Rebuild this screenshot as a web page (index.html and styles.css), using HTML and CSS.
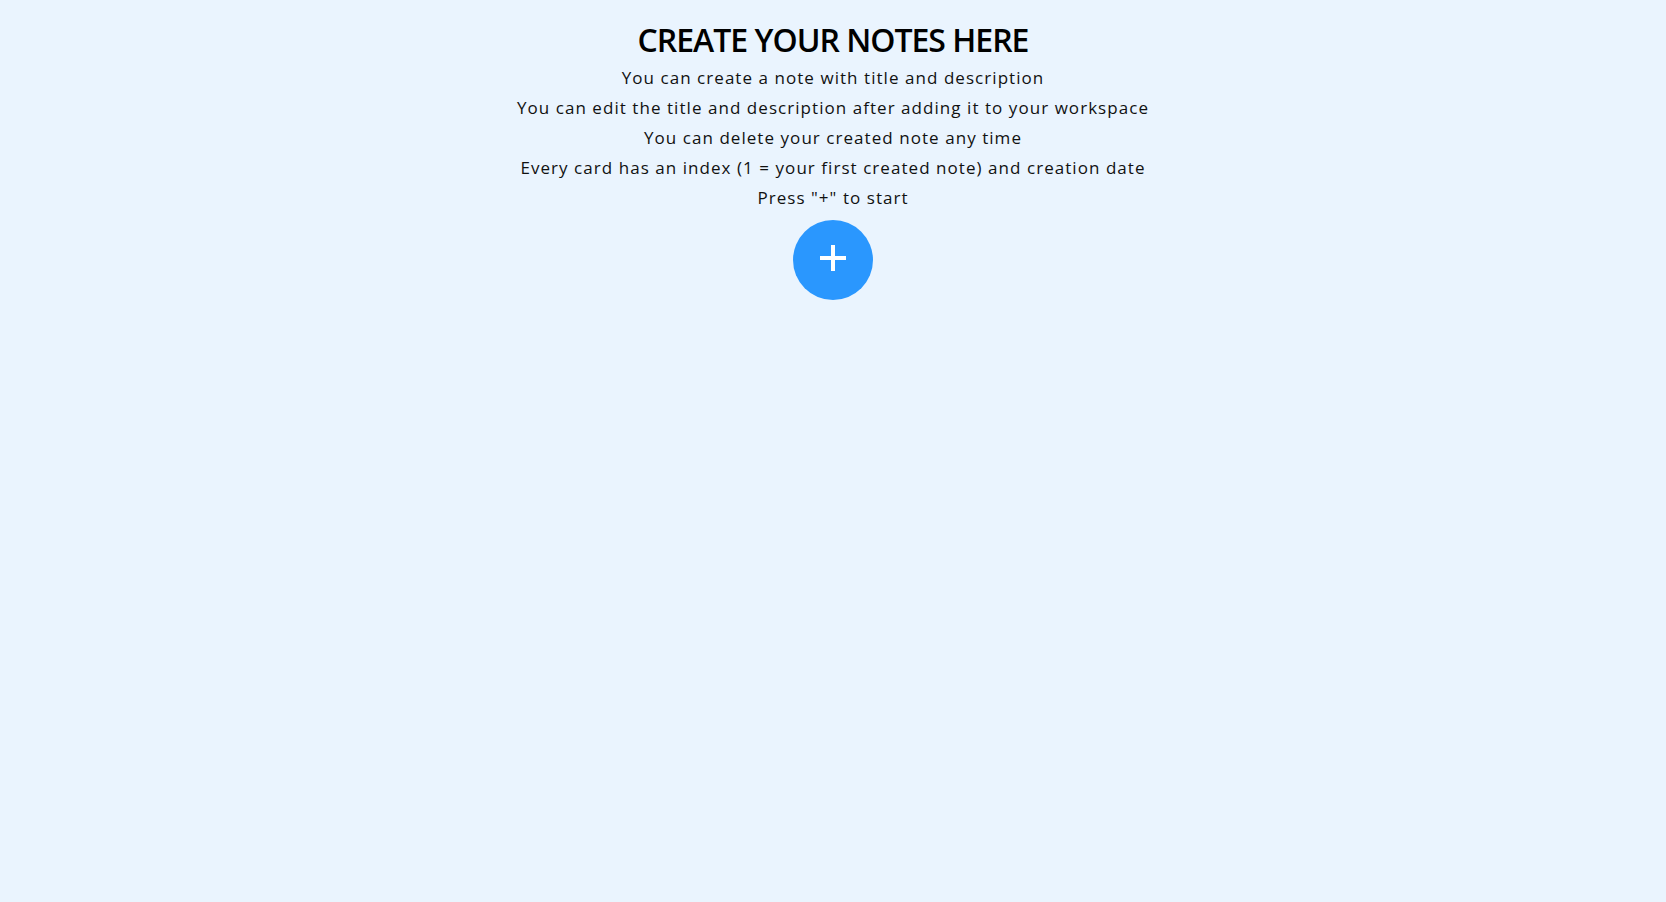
FILE: index.html
```html
<!DOCTYPE html>
<html lang="en">
<head>
<meta charset="utf-8">
<title>Notes</title>
<link rel="stylesheet" href="styles.css">
</head>
<body>
<main class="intro">
  <h1 class="intro-title">CREATE YOUR NOTES HERE</h1>
  <p class="intro-line">You can create a note with title and description</p>
  <p class="intro-line">You can edit the title and description after adding it to your workspace</p>
  <p class="intro-line">You can delete your created note any time</p>
  <p class="intro-line">Every card has an index (1 = your first created note) and creation date</p>
  <p class="intro-line">Press "+" to start</p>
  <button class="add-btn" type="button" aria-label="Add note">
    <svg class="add-icon" width="26" height="26" viewBox="0 0 26 26"><path d="M13 0v26M0 13h26" stroke="#fff" stroke-width="4"/></svg>
  </button>
</main>
</body>
</html>
```
FILE: styles.css
```css
html, body {
  margin: 0;
  padding: 0;
  background: #eaf4fe;
  min-height: 100%;
}
body {
  font-family: "Open Sans", "Liberation Sans", sans-serif;
  color: #111;
}
.intro {
  display: flex;
  flex-direction: column;
  align-items: center;
  padding-top: 18px;
}
.intro-title {
  margin: 0 0 1px;
  font-size: 32px;
  line-height: 44px;
  font-weight: 600;
  letter-spacing: -1px;
  color: #000;
}
.intro-line {
  margin: 0;
  font-size: 17px;
  line-height: 30px;
  letter-spacing: 1.05px;
}
.add-btn {
  margin-top: 7px;
  width: 80px;
  height: 80px;
  border: none;
  border-radius: 50%;
  background: #2a97fe;
  display: flex;
  align-items: center;
  justify-content: center;
  padding: 0 0 4px;
  cursor: pointer;
}
```
